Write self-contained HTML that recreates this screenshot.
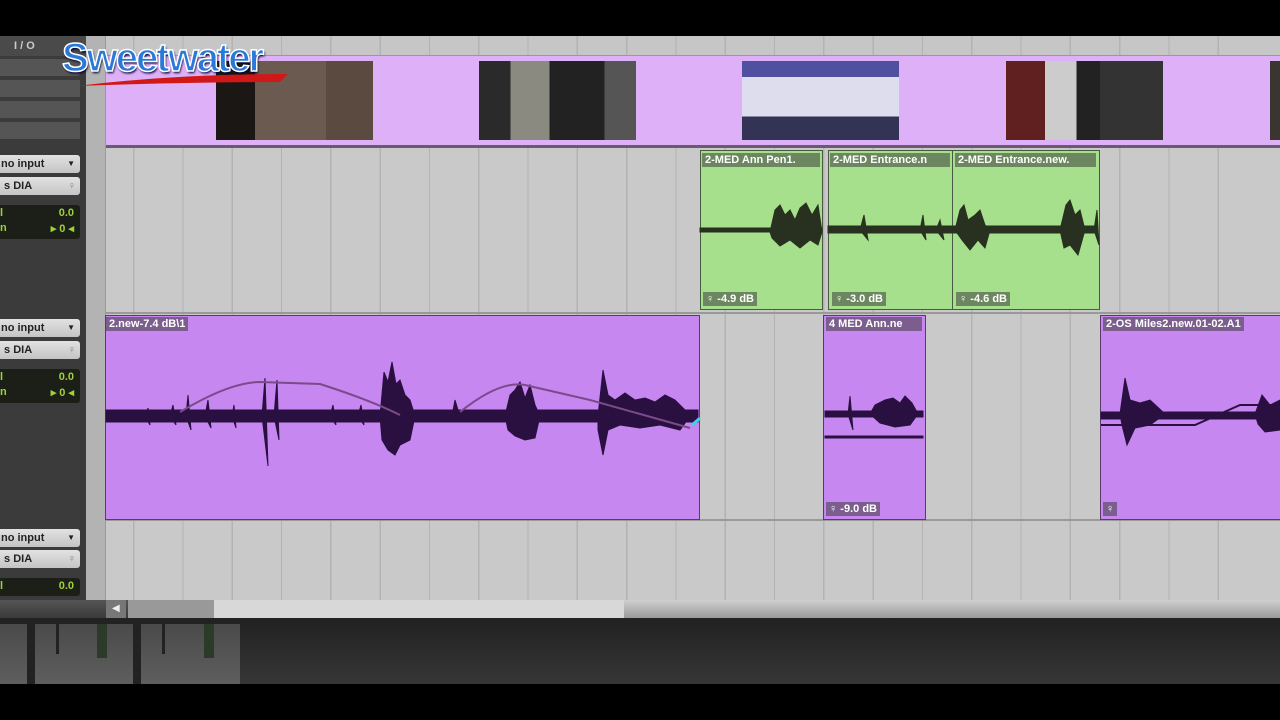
<!DOCTYPE html>
<html><head><meta charset="utf-8"><style>
*{margin:0;padding:0;box-sizing:border-box}
body{width:1280px;height:720px;background:#000;position:relative;overflow:hidden;font-family:"Liberation Sans",Arial,sans-serif}
.a{position:absolute}
.grid{background-color:#c9c9c9;background-image:repeating-linear-gradient(90deg,transparent 0 48px,#b3b3b3 48px 49.3px);background-position:-21px 0}
.btn{position:absolute;left:0;width:80px;height:18px;background:linear-gradient(#e2e2e2,#c4c4c4);border-radius:0 3px 3px 0;font:bold 11px "Liberation Sans",sans-serif;color:#222;line-height:18px;padding-left:1px}
.disp{position:absolute;left:0;width:80px;height:34px;background:#1c1f18;border-radius:0 3px 3px 0;color:#9fd23a;font:bold 11px "Liberation Sans",sans-serif}
.lbl{position:absolute;font:bold 11px "Liberation Sans",sans-serif;color:#fff;background:rgba(60,60,60,.55);padding:0 3px;height:14px;line-height:14px;white-space:nowrap;overflow:hidden}
.g{background:#a6e08c;border:1.5px solid #4a5a40}
.p{background:#c787f1;border:1.5px solid #5a3a6a}
.thumb{position:absolute;top:61px;height:79px;width:157px;background:#3a3530}
</style></head><body>
<!-- left panel -->
<div class="a" style="left:0;top:36px;width:86px;height:564px;background:#3b3b3b"></div>
<div class="a" style="left:0;top:36px;width:86px;height:20px;background:#4a4a4a;color:#ccc;font:bold 11px sans-serif;padding:4px 0 0 14px">I / O</div>
<div class="a" style="left:0;top:59px;width:80px;height:17px;background:#555;border-radius:0 3px 3px 0"></div>
<div class="a" style="left:0;top:80px;width:80px;height:17px;background:#555"></div>
<div class="a" style="left:0;top:101px;width:80px;height:17px;background:#555"></div>
<div class="a" style="left:0;top:122px;width:80px;height:17px;background:#555"></div>
<div class="btn" style="top:155px">no input<span style="position:absolute;right:5px;font-size:8px">▼</span></div>
<div class="btn" style="top:177px">&nbsp;s DIA<span style="position:absolute;right:4px;color:#888">♀</span></div>
<div class="disp" style="top:205px"><div style="position:absolute;top:2px;left:0">l</div><div style="position:absolute;top:2px;right:6px">0.0</div><div style="position:absolute;top:17px;left:0">n</div><div style="position:absolute;top:17px;right:6px">▸ 0 ◂</div></div>
<div class="btn" style="top:319px">no input<span style="position:absolute;right:5px;font-size:8px">▼</span></div>
<div class="btn" style="top:341px">&nbsp;s DIA<span style="position:absolute;right:4px;color:#888">♀</span></div>
<div class="disp" style="top:369px"><div style="position:absolute;top:2px;left:0">l</div><div style="position:absolute;top:2px;right:6px">0.0</div><div style="position:absolute;top:17px;left:0">n</div><div style="position:absolute;top:17px;right:6px">▸ 0 ◂</div></div>
<div class="btn" style="top:529px">no input<span style="position:absolute;right:5px;font-size:8px">▼</span></div>
<div class="btn" style="top:550px">&nbsp;s DIA<span style="position:absolute;right:4px;color:#888">♀</span></div>
<div class="disp" style="top:578px;height:18px"><div style="position:absolute;top:2px;left:0">l</div><div style="position:absolute;top:2px;right:6px">0.0</div></div>
<!-- ruler strip -->
<div class="a" style="left:86px;top:36px;width:20px;height:564px;background:#b3b3b3;border-right:1px solid #999"></div>
<!-- top ruler -->
<div class="a grid" style="left:106px;top:36px;width:1174px;height:20px;background-color:#c6c6c6;border-bottom:1px solid #999"></div>
<!-- video track -->
<div class="a" style="left:106px;top:56px;width:1174px;height:89px;background:#deb0f8"></div>
<div class="thumb" style="left:216px;background:linear-gradient(90deg,#1a1715 0 25%,#6a5a50 25% 70%,#5a4a40 70%)"></div>
<div class="thumb" style="left:479px;background:linear-gradient(90deg,#2a2a2a 0 20%,#8a8a80 20% 45%,#222 45% 80%,#555 80%)"></div>
<div class="thumb" style="left:742px;background:linear-gradient(#5050a0 0 20%,#dde 20% 70%,#335 70%)"></div>
<div class="thumb" style="left:1006px;background:linear-gradient(90deg,#602020 0 25%,#ccc 25% 45%,#222 45% 60%,#333 60%)"></div>
<div class="thumb" style="left:1270px;width:10px"></div>
<div class="a" style="left:106px;top:145px;width:1174px;height:3px;background:#6a5a70"></div>
<!-- tracks -->
<div class="a grid" style="left:106px;top:148px;width:1174px;height:164px"></div>
<div class="a" style="left:106px;top:312px;width:1174px;height:2px;background:#999"></div>
<div class="a grid" style="left:106px;top:314px;width:1174px;height:206px"></div>
<div class="a" style="left:106px;top:519px;width:1174px;height:2px;background:#999"></div>
<div class="a grid" style="left:106px;top:521px;width:1174px;height:79px"></div>
<!-- green clips -->
<div class="a g" style="left:700px;top:150px;width:123px;height:160px"></div>
<div class="a g" style="left:828px;top:150px;width:125px;height:160px"></div>
<div class="a g" style="left:952px;top:150px;width:148px;height:160px"></div>
<div class="lbl" style="left:702px;top:153px;width:118px">2-MED Ann Pen1.</div>
<div class="lbl" style="left:830px;top:153px;width:120px">2-MED Entrance.n</div>
<div class="lbl" style="left:955px;top:153px;width:141px">2-MED Entrance.new.</div>
<div class="lbl" style="left:703px;top:292px">♀ -4.9 dB</div>
<div class="lbl" style="left:832px;top:292px">♀ -3.0 dB</div>
<div class="lbl" style="left:956px;top:292px">♀ -4.6 dB</div>
<!-- purple clips -->
<div class="a p" style="left:105px;top:315px;width:595px;height:205px"></div>
<div class="a p" style="left:823px;top:315px;width:103px;height:205px"></div>
<div class="a p" style="left:1100px;top:315px;width:182px;height:205px"></div>
<div class="lbl" style="left:106px;top:317px">2.new-7.4 dB\1</div>
<div class="lbl" style="left:826px;top:317px;width:96px">4 MED Ann.ne</div>
<div class="lbl" style="left:1103px;top:317px">2-OS Miles2.new.01-02.A1</div>
<div class="lbl" style="left:826px;top:502px">♀ -9.0 dB</div>
<div class="lbl" style="left:1103px;top:502px">♀</div>
<svg class="a" style="left:0;top:0" width="1280" height="720">
<g fill="#283020" stroke="#283020">
<rect x="700" y="228" width="122" height="4"/>
<path d="M770 232 L775 210 L780 205 L785 215 L790 210 L795 220 L800 208 L806 203 L812 215 L818 205 L822 232 L818 245 L810 240 L800 248 L790 240 L780 246 L772 238Z"/>
<rect x="828" y="226" width="270" height="7"/>
<path d="M860 230 L864 215 L868 240Z M920 230 L923 215 L926 240Z M955 230 L960 210 L964 205 L968 220 L975 215 L980 210 L985 225 L990 230 L985 248 L978 240 L970 250 L962 240Z M1060 230 L1066 205 L1070 200 L1075 215 L1080 210 L1085 230 L1078 255 L1070 245 L1064 248Z M1094 230 L1097 210 L1099 245Z M936 230 L940 220 L944 240Z"/>
</g>
<g fill="#2a1040" stroke="#2a1040">
<rect x="106" y="410" width="592" height="12"/>
<path d="M186 416 L188 395 L191 430Z M205 416 L208 400 L211 428Z M262 416 L265 378 L268 466Z M274 416 L277 380 L279 440Z M232 416 L234 405 L236 428Z M380 416 L384 372 L388 382 L392 362 L396 384 L400 380 L405 395 L410 400 L415 416 L410 440 L400 445 L395 455 L388 450 L382 440Z M452 416 L455 400 L458 410Z M505 416 L510 395 L515 390 L520 382 L525 398 L530 385 L535 405 L540 416 L535 438 L525 440 L515 436 L508 430Z M598 416 L603 370 L608 395 L615 400 L625 393 L635 400 L645 398 L655 402 L665 395 L675 400 L685 410 L690 416 L680 430 L660 425 L640 428 L620 425 L608 430 L603 455 L598 430Z M170 416 L173 405 L176 425Z M330 416 L333 405 L336 425Z M358 416 L361 405 L364 425Z M145 416 L148 408 L150 425Z"/>
<rect x="825" y="411" width="98" height="6"/>
<path d="M848 414 L850 396 L853 430Z M870 414 L875 405 L885 400 L893 398 L900 403 L905 396 L912 403 L918 414 L910 425 L895 427 L880 423Z"/>
<rect x="825" y="436" width="98" height="2"/>
<rect x="1101" y="412" width="179" height="7"/>
<path d="M1120 414 L1125 378 L1130 400 L1140 403 L1150 400 L1165 414 L1150 425 L1135 428 L1127 445 L1122 425Z M1255 414 L1262 395 L1270 405 L1280 400 L1280 430 L1265 432 L1258 424Z"/>
</g>
<g fill="none" stroke="#7a4a8a" stroke-width="2">
<path d="M180 412 Q230 382 260 382 L320 384 Q370 400 400 415 M460 412 Q500 380 525 385 L590 400 L690 428"/>
<path d="M1101 425 L1195 425 L1240 405 L1280 405" stroke="#2a1040"/>
</g>
<path d="M692 425 L700 418" stroke="#40d0f0" stroke-width="3"/>
</svg>
<!-- scroll bar -->
<div class="a" style="left:0;top:600px;width:1280px;height:18px;background:linear-gradient(#555,#3a3a3a)"></div>
<div class="a" style="left:106px;top:600px;width:20px;height:18px;background:#777;color:#eee;font-size:10px;padding:3px 0 0 6px">◀</div>
<div class="a" style="left:128px;top:600px;width:86px;height:18px;background:#999"></div>
<div class="a" style="left:214px;top:600px;width:410px;height:18px;background:#d8d8d8"></div>
<div class="a" style="left:624px;top:600px;width:656px;height:18px;background:linear-gradient(#cfcfcf,#9a9a9a)"></div>
<div class="a" style="left:0;top:618px;width:1280px;height:6px;background:#222"></div>
<!-- meters -->
<div class="a" style="left:0;top:624px;width:240px;height:60px;background:linear-gradient(#4a4a4a,#5e5e5e)"></div>
<div class="a" style="left:240px;top:624px;width:1040px;height:60px;background:linear-gradient(#232323,#363636)"></div>
<div class="a" style="left:27px;top:624px;width:8px;height:60px;background:#222"></div>
<div class="a" style="left:133px;top:624px;width:8px;height:60px;background:#222"></div>
<div class="a" style="left:97px;top:624px;width:10px;height:34px;background:#2c3a2a"></div>
<div class="a" style="left:204px;top:624px;width:10px;height:34px;background:#2c3a2a"></div>
<div class="a" style="left:56px;top:624px;width:3px;height:30px;background:#222"></div>
<div class="a" style="left:162px;top:624px;width:3px;height:30px;background:#222"></div>
<!-- logo -->
<svg class="a" style="left:75px;top:70px" width="215" height="18"><path d="M2 16 Q100 4 213 4 L205 12 Q110 12 2 16Z" fill="#d01818"/></svg>
<div class="a" style="left:62px;top:36px;font:bold 40px 'Liberation Sans',sans-serif;color:#2a78d8;letter-spacing:-2px;-webkit-text-stroke:1.5px #fff;text-shadow:1px 2px 2px #003">Sweetwater</div>
</body></html>
